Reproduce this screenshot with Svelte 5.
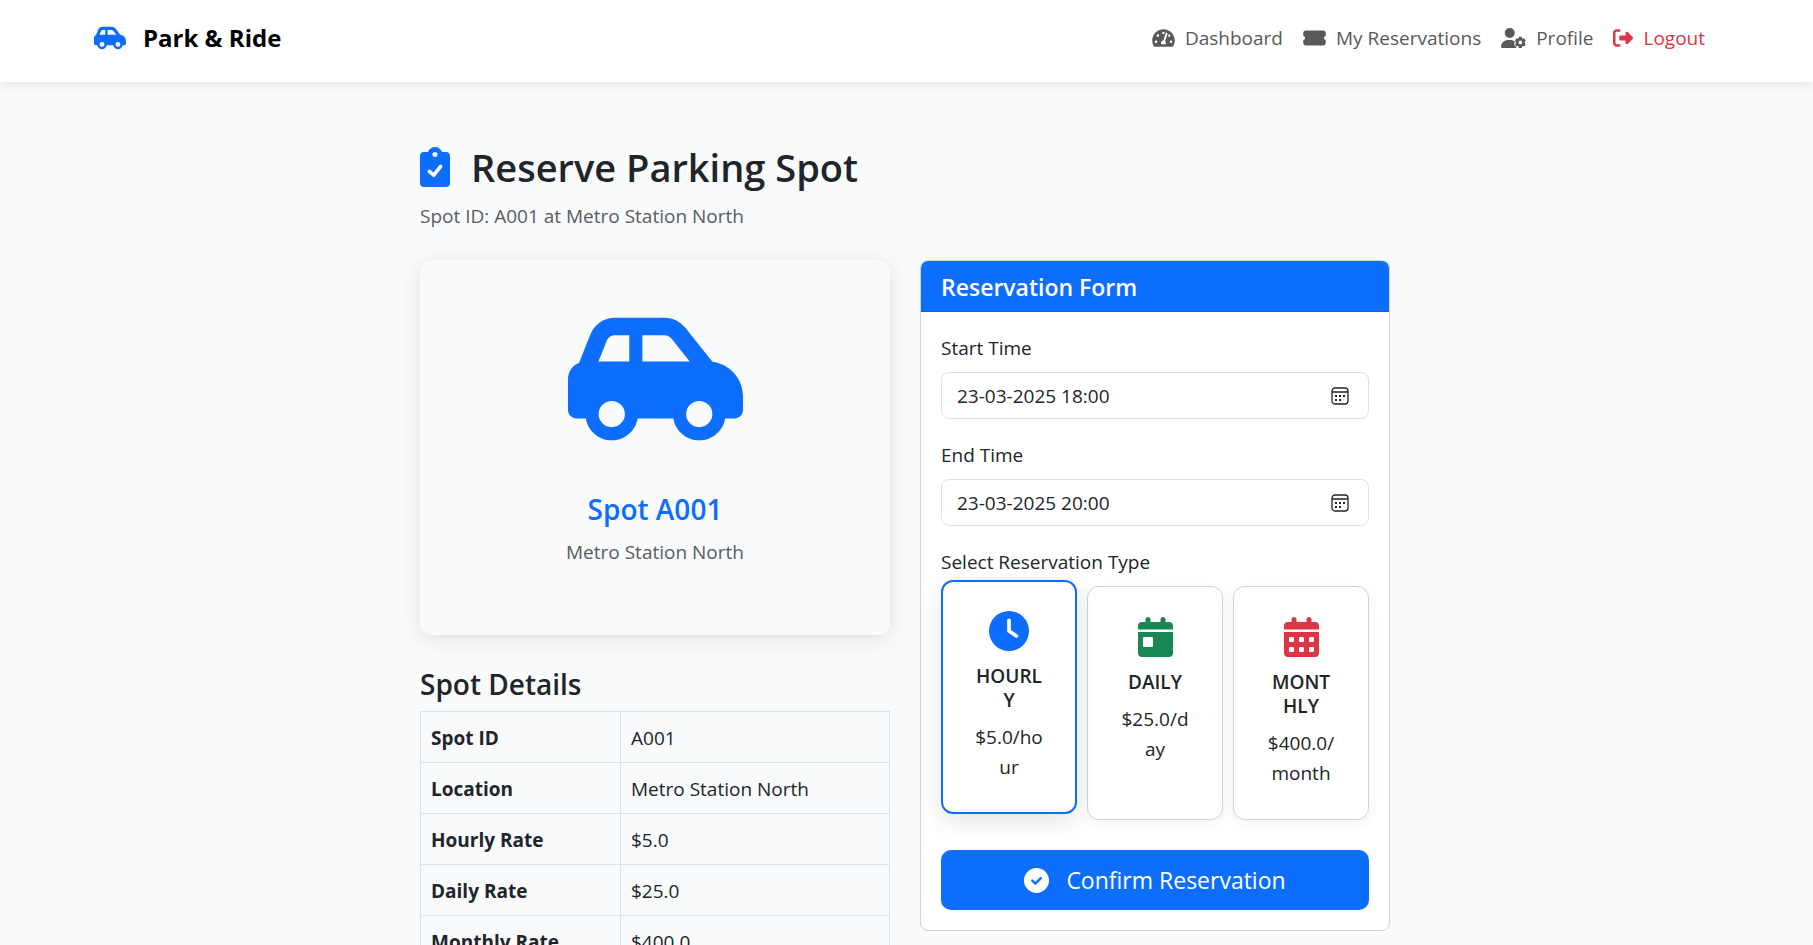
<script>
  const carPath = 'M171.3 96H224v96H111.3l30.4-75.9C146.5 104 158.2 96 171.3 96zM272 192V96h81.2c9.7 0 18.9 4.4 25 12l67 84H272zm256.2 1L428.2 68c-18.2-22.8-45.8-36-75-36H171.3c-39.3 0-74.6 23.9-89.1 60.3L40.6 196.4C16.8 205.8 0 228.9 0 256V368c0 17.7 14.3 32 32 32H65.3c7.6 45.4 47.1 80 94.7 80s87.1-34.6 94.7-80H385.3c7.6 45.4 47.1 80 94.7 80s87.1-34.6 94.7-80H608c17.7 0 32-14.3 32-32V320c0-65.2-48.8-119-111.8-127zM528 384a48 48 0 1 1 -96 0 48 48 0 1 1 96 0zM160 336a48 48 0 1 1 0 96 48 48 0 1 1 0-96z';
  const calendarTop = 'M128 0c17.7 0 32 14.3 32 32V64H288V32c0-17.7 14.3-32 32-32s32 14.3 32 32V64h48c26.5 0 48 21.5 48 48v48H0V112C0 85.5 21.5 64 48 64H96V32c0-17.7 14.3-32 32-32zM0 192H448V464c0 26.5-21.5 48-48 48H48c-26.5 0-48-21.5-48-48V192z';

  const links = [
    { label: 'Dashboard', box: '0 0 576 512', width: 23, path: 'M288 32C128.94 32 0 160.94 0 320c0 52.8 14.25 102.26 39.06 144.8 5.61 9.62 16.3 15.2 27.44 15.2h443c11.14 0 21.83-5.58 27.44-15.2C561.75 422.26 576 372.8 576 320c0-159.06-128.94-288-288-288zm0 64c14.71 0 26.58 10.13 30.32 23.65-1.11 2.26-2.64 4.23-3.45 6.67l-9.22 27.67c-5.13 3.49-10.97 6.01-17.64 6.01-17.67 0-32-14.33-32-32S270.33 96 288 96zM96 384c-17.67 0-32-14.33-32-32s14.33-32 32-32 32 14.33 32 32-14.33 32-32 32zm48-160c-17.67 0-32-14.33-32-32s14.33-32 32-32 32 14.33 32 32-14.33 32-32 32zm246.77-72.41l-61.33 184C343.13 347.33 352 364.54 352 384c0 11.72-3.38 22.55-8.88 32H232.88c-5.5-9.45-8.88-20.28-8.88-32 0-33.94 26.5-61.43 59.9-63.59l61.34-184.01c4.17-12.56 17.73-19.45 30.36-15.17 12.57 4.19 19.35 17.79 15.17 30.36zm14.66 57.2l15.52-46.55c3.47-1.29 7.13-2.23 11.05-2.23 17.67 0 32 14.33 32 32s-14.33 32-32 32c-11.38-.01-20.89-6.28-26.57-15.22zM480 384c-17.67 0-32-14.33-32-32s14.33-32 32-32 32 14.33 32 32-14.33 32-32 32z' },
    { label: 'My Reservations', box: '0 0 576 512', width: 23, path: 'M64 64C28.7 64 0 92.7 0 128v64c0 8.8 7.4 15.7 15.7 18.6C34.5 217.1 48 235 48 256s-13.5 38.9-32.3 45.4C7.4 304.3 0 311.2 0 320v64c0 35.3 28.7 64 64 64H512c35.3 0 64-28.7 64-64V320c0-8.8-7.4-15.7-15.7-18.6C541.5 294.9 528 277 528 256s13.5-38.9 32.3-45.4c8.3-2.9 15.7-9.8 15.7-18.6V128c0-35.3-28.7-64-64-64H64z' },
    { label: 'Profile', box: '0 0 640 512', width: 25, path: 'M224 256A128 128 0 1 0 224 0a128 128 0 1 0 0 256zm-45.7 48C79.8 304 0 383.8 0 482.3C0 498.7 13.3 512 29.7 512H392.600c-5.400-9.400-8.600-20.300-8.600-32v-8c-18-9-34-25-42-42c-14-26-4-50 19-67c-20-36-60-59-103.300-59H178.300zM471 224c-9 2-15 8-16 17l-4 24c-8 3-16 8-23 13l-23-8c-8-3-15 0-20 7l-23 40c-5 8-3 16 3 22l19 17c-1 9-1 18 0 27l-19 17c-6 6-8 14-3 22l23 40c5 7 12 10 20 7l23-8c7 5 15 10 23 13l4 24c1 9 7 15 16 17h48c9-2 15-8 16-17l4-24c8-3 16-8 23-13l23 8c8 3 15 0 20-7l23-40c5-8 3-16-3-22l-19-17c1-9 1-18 0-27l19-17c6-6 8-14 3-22l-23-40c-5-7-12-10-20-7l-23 8c-7-5-15-10-23-13l-4-24c-1-9-7-15-16-17zM496 320a48 48 0 1 1 0 96 48 48 0 1 1 0-96z' },
    { label: 'Logout', box: '0 0 512 512', width: 20, danger: true, path: 'M160 96c17.700 0 32-14.300 32-32s-14.300-32-32-32H96C43 32 0 75 0 128V384c0 53 43 96 96 96h64c17.700 0 32-14.300 32-32s-14.300-32-32-32H96c-17.700 0-32-14.300-32-32V128c0-17.700 14.300-32 32-32h64zM502.600 278.600c12.500-12.500 12.500-32.800 0-45.300l-128-128C353.900 88 320 104 320 128v64H192c-17.700 0-32 14.300-32 32v64c0 17.700 14.300 32 32 32H320v64c0 24 34 40 54.600 22.600z' }
  ];

  const details = [
    ['Spot ID', 'A001'],
    ['Location', 'Metro Station North'],
    ['Hourly Rate', '$5.0'],
    ['Daily Rate', '$25.0'],
    ['Monthly Rate', '$400.0']
  ];

  const types = [
    { id: 'hourly', label: 'HOURLY', price: '$5.0/hour', color: '#0d6efd', box: '0 0 512 512', width: 40, path: 'M256 0a256 256 0 1 1 0 512A256 256 0 1 1 256 0zM232 120V256c0 8 4 15.500 10.700 20l96 64c11 7.400 25.900 4.400 33.300-6.700s4.400-25.900-6.700-33.300L280 243.200V120c0-13.300-10.700-24-24-24s-24 10.700-24 24z' },
    { id: 'daily', label: 'DAILY', price: '$25.0/day', color: '#198754', box: '0 0 448 512', width: 35, path: calendarTop + 'm80 64c-8.8 0-16 7.2-16 16v96c0 8.8 7.2 16 16 16h96c8.8 0 16-7.2 16-16V272c0-8.8-7.2-16-16-16H80z' },
    { id: 'monthly', label: 'MONTHLY', price: '$400.0/month', color: '#dc3545', box: '0 0 448 512', width: 35, path: calendarTop + 'm64 80v32c0 8.800 7.200 16 16 16h32c8.800 0 16-7.200 16-16V272c0-8.800-7.200-16-16-16H80c-8.800 0-16 7.200-16 16zm128 0v32c0 8.800 7.200 16 16 16h32c8.800 0 16-7.200 16-16V272c0-8.800-7.200-16-16-16H208c-8.800 0-16 7.200-16 16zm144-16c-8.800 0-16 7.200-16 16v32c0 8.800 7.200 16 16 16h32c8.800 0 16-7.200 16-16V272c0-8.800-7.200-16-16-16H336zM64 400v32c0 8.800 7.200 16 16 16h32c8.800 0 16-7.200 16-16V400c0-8.800-7.200-16-16-16H80c-8.800 0-16 7.200-16 16zm144-16c-8.800 0-16 7.200-16 16v32c0 8.800 7.200 16 16 16h32c8.800 0 16-7.200 16-16V400c0-8.800-7.200-16-16-16H208zm112 16v32c0 8.800 7.200 16 16 16h32c8.800 0 16-7.200 16-16V400c0-8.800-7.200-16-16-16H336c-8.800 0-16 7.200-16 16z' }
  ];

  let selected = $state('hourly');
  let start = $state('23-03-2025 18:00');
  let end = $state('23-03-2025 20:00');
</script>

{#snippet calendarIcon()}
  <svg class="picker" viewBox="0 0 18 18" width="18" height="18" aria-hidden="true">
    <rect x="1" y="1" width="16" height="16" rx="3" fill="none" stroke="currentColor" stroke-width="1.300" />
    <path d="M1 5h16" stroke="currentColor" stroke-width="1.300" />
    <path d="M4 8h2v2H4zM8 8h2v2H8zM12 8h2v2h-2zM4 12h2v2H4zM8 12h2v2H8z" fill="currentColor" />
  </svg>
{/snippet}

<header>
  <div class="bar">
    <a class="brand" href="#home">
      <svg viewBox="0 0 640 512" width="32" height="26" aria-hidden="true"><path fill="currentColor" d={carPath} /></svg>
      <span>Park &amp; Ride</span>
    </a>
    <nav>
      {#each links as link}
        <a href="#{link.label.toLowerCase().replace(' ', '-')}" class:danger={link.danger}>
          <svg viewBox={link.box} width={link.width} height="20" aria-hidden="true"><path fill="currentColor" d={link.path} /></svg>
          <span>{link.label}</span>
        </a>
      {/each}
    </nav>
  </div>
</header>

<main>
  <h1>
    <svg viewBox="0 0 384 512" width="30" height="40" aria-hidden="true"><path fill="#0d6efd" d="M192 0c-41.800 0-77.400 26.700-90.500 64H48C21.500 64 0 85.500 0 112V464c0 26.500 21.500 48 48 48H336c26.500 0 48-21.500 48-48V112c0-26.500-21.500-48-48-48H282.500C269.400 26.700 233.800 0 192 0zm0 64a32 32 0 1 1 0 64 32 32 0 1 1 0-64z" /><path fill="none" stroke="#fff" stroke-width="46" stroke-linecap="round" stroke-linejoin="round" d="M120 312l56 48 88-112" /></svg>
    <span>Reserve Parking Spot</span>
  </h1>
  <p class="muted subtitle">Spot ID: A001 at Metro Station North</p>

  <div class="columns">
    <section>
      <div class="spot">
        <svg viewBox="0 0 640 512" width="175" height="140" aria-hidden="true"><path fill="currentColor" d={carPath} /></svg>
        <h3>Spot A001</h3>
        <p class="muted">Metro Station North</p>
      </div>
      <h3>Spot Details</h3>
      <table>
        <tbody>
          {#each details as [name, value]}
            <tr><th scope="row">{name}</th><td>{value}</td></tr>
          {/each}
        </tbody>
      </table>
    </section>

    <form class="card">
      <h2>Reservation Form</h2>
      <div class="body">
        <label for="start">Start Time</label>
        <div class="field"><input id="start" type="text" bind:value={start} />{@render calendarIcon()}</div>
        <label for="end">End Time</label>
        <div class="field"><input id="end" type="text" bind:value={end} />{@render calendarIcon()}</div>
        <fieldset>
          <legend>Select Reservation Type</legend>
          <div class="types">
            {#each types as type}
              <label class="type" class:selected={selected === type.id}>
                <input type="radio" name="type" value={type.id} bind:group={selected} />
                <svg viewBox={type.box} width={type.width} height="40" aria-hidden="true"><path fill={type.color} fill-rule="evenodd" d={type.path} /></svg>
                <strong>{type.label}</strong>
                <span>{type.price}</span>
              </label>
            {/each}
          </div>
        </fieldset>
        <button type="button">
          <svg viewBox="0 0 512 512" width="25" height="25" aria-hidden="true"><circle cx="256" cy="256" r="256" fill="#fff" /><path fill="none" stroke="#0d6efd" stroke-width="48" stroke-linecap="round" stroke-linejoin="round" d="M168 256l64 64 112-112" /></svg>
          <span>Confirm Reservation</span>
        </button>
      </div>
    </form>
  </div>
</main>

<style>
  :global(body) {
    background: #f8fafc;
    color: #212529;
    font-family: "Segoe UI", "Open Sans", "Noto Sans", sans-serif;
    font-size: 19px;
    line-height: 30px;
  }
  :global(*) { box-sizing: border-box; }
  svg { display: block; flex: none; }
  header {
    background: #fff;
    box-shadow: 0 2px 10px rgba(0, 0, 0, 0.1);
    padding-right: 3px;
  }
  .bar {
    max-width: 1650px;
    height: 82px;
    margin: 0 auto;
    padding: 0 15px 6px 14px;
    display: flex;
    align-items: center;
    justify-content: space-between;
  }
  a { text-decoration: none; }
  .brand {
    display: flex;
    align-items: center;
    gap: 17px;
    color: #0d6efd;
    font-size: 24px;
    font-weight: 700;
  }
  .brand span { color: #000; }
  nav { display: flex; }
  nav a {
    display: flex;
    align-items: center;
    gap: 10px;
    padding: 0 10px;
    color: #595959;
  }
  nav .danger { color: #dc3545; }
  main {
    max-width: 1003px;
    margin: 0 auto;
    padding: 61px 18px 40px 15px;
  }
  h1, h2, h3, p { margin: 0; }
  h1, h2, h3, strong { font-weight: 600; }
  h1 {
    display: flex;
    align-items: center;
    gap: 21px;
    font-size: 38px;
    line-height: 48px;
  }
  .muted { color: #595c5f; }
  .subtitle { padding: 10px 0 29px; }
  .columns {
    display: grid;
    grid-template-columns: 1fr 1fr;
    gap: 30px;
    align-items: start;
  }
  h3 { font-size: 28px; line-height: 34px; margin-bottom: 10px; }
  .spot {
    display: flex;
    flex-direction: column;
    align-items: center;
    height: 375px;
    padding-top: 49px;
    margin-bottom: 32px;
    border-radius: 12px;
    background: #f8fafc;
    box-shadow: 0 4px 20px rgba(0, 0, 0, 0.1);
    color: #0d6efd;
  }
  .spot h3 { margin: 43px 0 11px; }
  table { width: 100%; border-collapse: collapse; }
  th, td { border: 1px solid #dee2e6; padding: 11px 10px 9px; text-align: left; }
  th { width: 200px; font-weight: 700; }
  .card {
    background: #fff;
    border: 1px solid #d0d2d4;
    border-radius: 8px;
    overflow: hidden;
  }
  h2 {
    background: #0d6efd;
    border-bottom: 1px solid #0c5fd9;
    color: #fff;
    padding: 11px 20px 9px;
    font-size: 23px;
    line-height: 30px;
  }
  .body { padding: 20px; }
  label, legend { display: block; padding: 1px 0 9px; }
  .field {
    display: flex;
    align-items: center;
    height: 47px;
    margin-bottom: 20px;
    padding: 0 19px 0 15px;
    border: 1px solid #dee2e6;
    border-radius: 8px;
    color: #212529;
  }
  .field input {
    flex: 1;
    min-width: 0;
    border: 0;
    padding: 0;
    outline: 0;
    background: none;
    color: inherit;
    font: inherit;
  }
  fieldset { border: 0; margin: 0; padding: 0; min-width: 0; }
  .types { display: grid; grid-template-columns: repeat(3, 1fr); gap: 10px; }
  .type {
    display: flex;
    flex-direction: column;
    align-items: center;
    min-width: 0;
    height: 234px;
    padding: 30px 32px;
    border: 1px solid #d0d2d4;
    border-radius: 12px;
    background: #fff;
    box-shadow: 0 4px 15px rgba(0, 0, 0, 0.05);
    text-align: center;
    overflow-wrap: anywhere;
    cursor: pointer;
  }
  .type.selected {
    border: 2px solid #0d6efd;
    padding: 29px 31px;
    box-shadow: 0 8px 25px rgba(0, 0, 0, 0.1);
    transform: translateY(-6px);
  }
  .type input { appearance: none; position: absolute; margin: 0; }
  .type strong { line-height: 24px; margin: 13px 0 10px; width: 100%; }
  .type span { width: 100%; }
  button {
    display: flex;
    align-items: center;
    justify-content: center;
    gap: 17px;
    width: 100%;
    height: 60px;
    margin-top: 30px;
    border: 0;
    border-radius: 10px;
    background: #0d6efd;
    color: #fff;
    font: inherit;
    font-size: 23px;
  }
</style>
